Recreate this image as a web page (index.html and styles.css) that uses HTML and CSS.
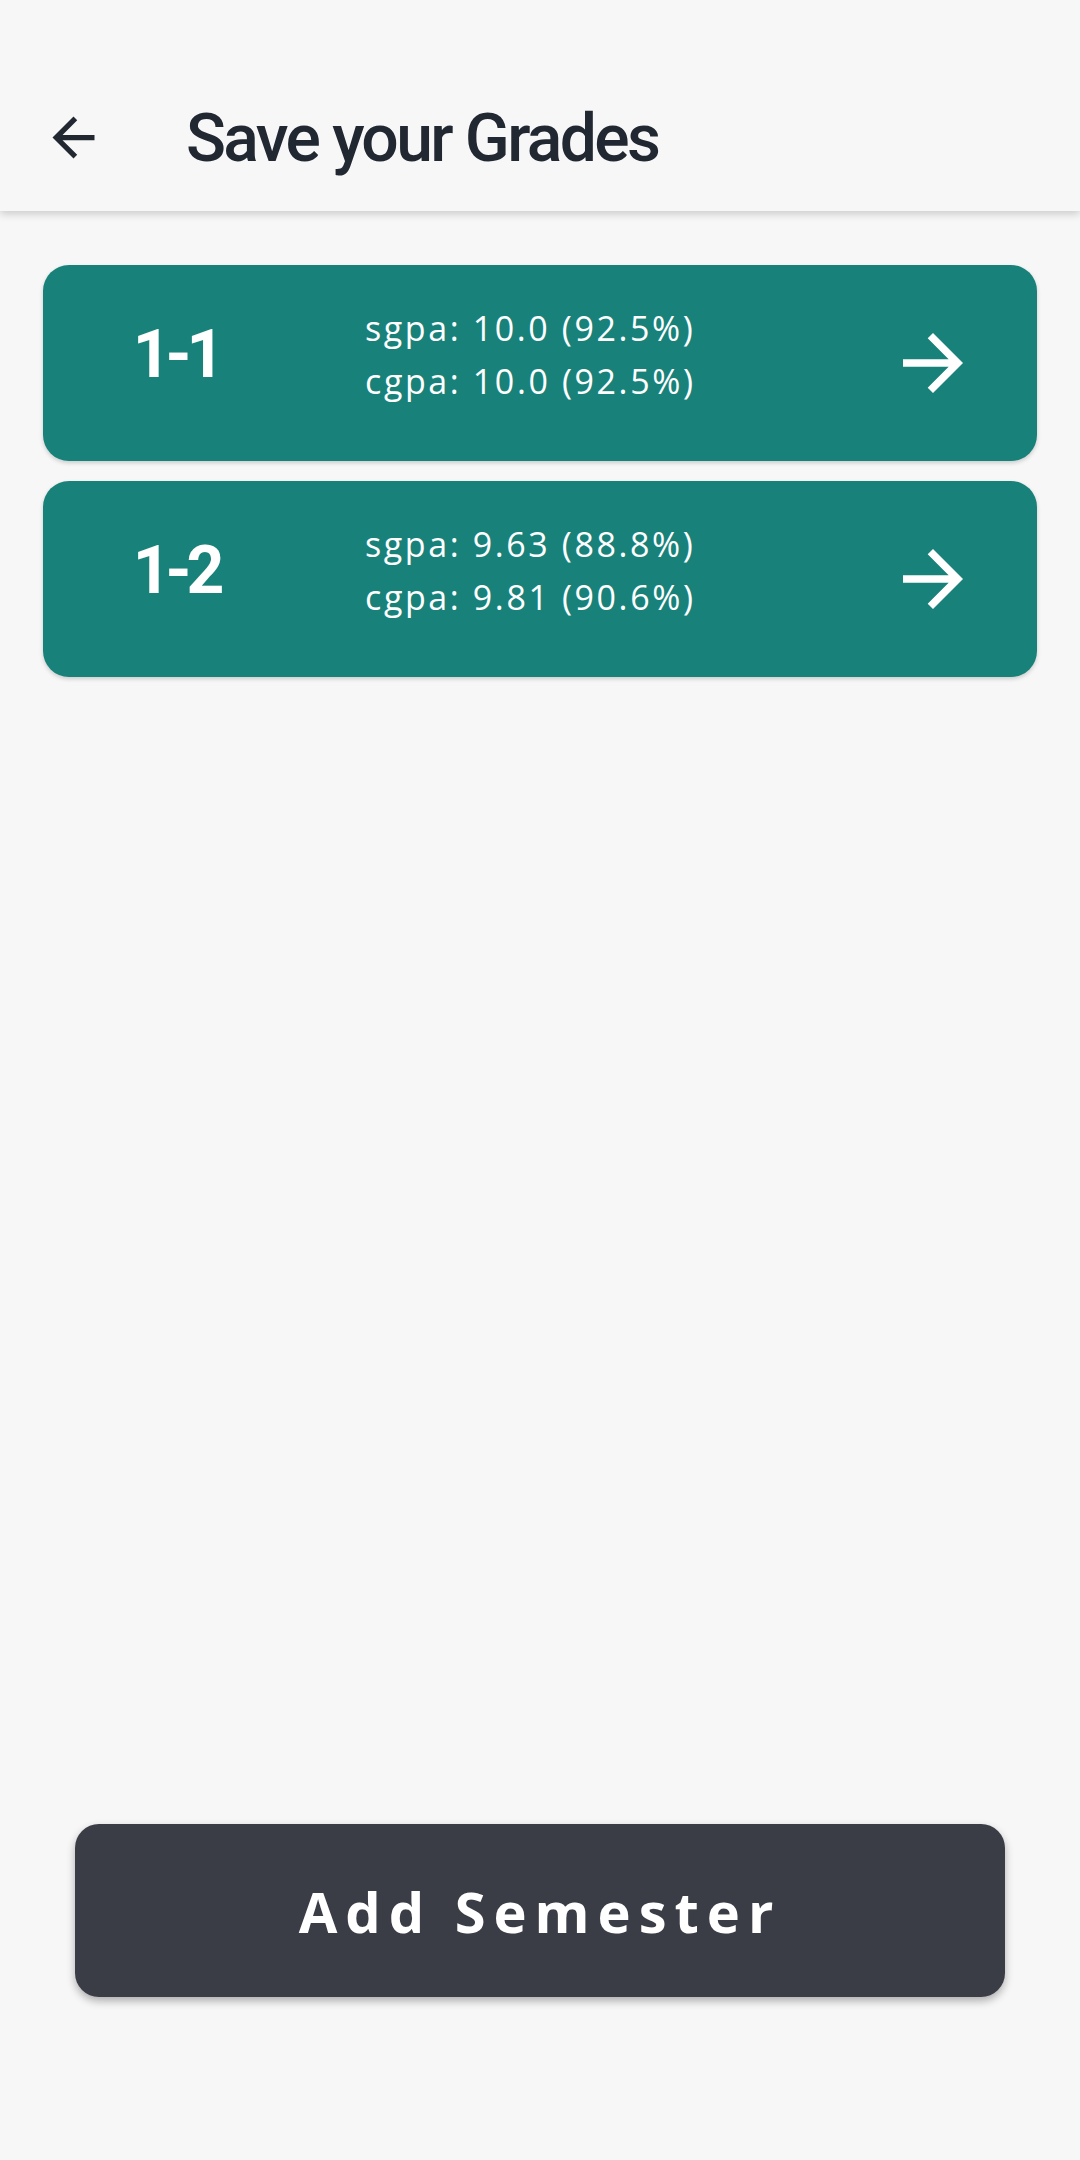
FILE: index.html
```html
<!DOCTYPE html>
<html lang="en">
<head>
<meta charset="utf-8">
<title>Save your Grades</title>
<link rel="stylesheet" href="styles.css">
</head>
<body>
<div class="screen">
  <header class="appbar">
    <div class="toolbar">
      <svg class="back" viewBox="0 0 24 24" aria-hidden="true"><path d="M20 11H7.83l5.59-5.59L12 4l-8 8 8 8 1.41-1.41L7.83 13H20v-2z"/></svg>
      <h1 class="title">Save your Grades</h1>
    </div>
  </header>
  <main class="list">
    <div class="card">
      <div class="sem">1-1</div>
      <div class="stats">
        <div class="line">sgpa: 10.0 (92.5%)</div>
        <div class="line">cgpa: 10.0 (92.5%)</div>
      </div>
      <svg class="go" viewBox="0 0 24 24" aria-hidden="true"><path d="M12 4l-1.41 1.41L16.17 11H4v2h12.17l-5.58 5.59L12 20l8-8z"/></svg>
    </div>
    <div class="card">
      <div class="sem">1-2</div>
      <div class="stats">
        <div class="line">sgpa: 9.63 (88.8%)</div>
        <div class="line">cgpa: 9.81 (90.6%)</div>
      </div>
      <svg class="go" viewBox="0 0 24 24" aria-hidden="true"><path d="M12 4l-1.41 1.41L16.17 11H4v2h12.17l-5.58 5.59L12 20l8-8z"/></svg>
    </div>
  </main>
  <button class="add">Add Semester</button>
</div>
</body>
</html>
```
FILE: styles.css
```css
html, body {
  margin: 0;
  padding: 0;
  background: #f7f7f7;
}
.screen {
  height: 2160px;
  display: flex;
  flex-direction: column;
  background: #f7f7f7;
}
.appbar {
  height: 211px;
  padding-top: 63px;
  box-sizing: border-box;
  background: #f7f7f7;
  box-shadow: 0 3px 8px rgba(0,0,0,0.18);
  position: relative;
  z-index: 1;
}
.toolbar {
  height: 148px;
  display: flex;
  align-items: center;
  padding-left: 42px;
}
.back {
  width: 63px;
  height: 63px;
  fill: #222831;
  flex: none;
}
.title {
  margin: 4px 0 0 81px;
  font-family: Roboto, "Liberation Sans", sans-serif;
  font-weight: 500;
  font-size: 66px;
  letter-spacing: -2.6px;
  color: #222831;
  line-height: 1;
}
.list {
  padding: 54px 43px 0;
  display: flex;
  flex-direction: column;
  gap: 20px;
}
.card {
  height: 196px;
  border-radius: 26px;
  background: #18827a;
  box-shadow: 0 2px 4px rgba(0,0,0,0.18);
  display: flex;
  align-items: center;
  color: #ffffff;
}
.sem {
  width: 266px;
  flex: none;
  box-sizing: border-box;
  text-align: center;
  padding: 0 0 16px 0;
  font-family: Roboto, "Liberation Sans", sans-serif;
  font-weight: 700;
  font-size: 66px;
  letter-spacing: -5px;
  line-height: 1;
}
.stats {
  margin-left: 56px;
  padding-bottom: 16px;
  flex: 1;
  font-family: "Open Sans", "Noto Sans", sans-serif;
  font-weight: 500;
  font-size: 34px;
  line-height: 53px;
  letter-spacing: 2.6px;
}
.go {
  width: 90px;
  height: 90px;
  fill: #ffffff;
  flex: none;
  margin-right: 59px;
}
.add {
  margin: auto 75px 163px;
  height: 173px;
  border: none;
  border-radius: 24px;
  background: #3a3c46;
  box-shadow: 0 4px 8px rgba(0,0,0,0.3);
  color: #ffffff;
  font-family: "Open Sans", "Noto Sans", sans-serif;
  font-weight: 700;
  font-size: 56px;
  letter-spacing: 8px;
  padding: 0;
}
```
